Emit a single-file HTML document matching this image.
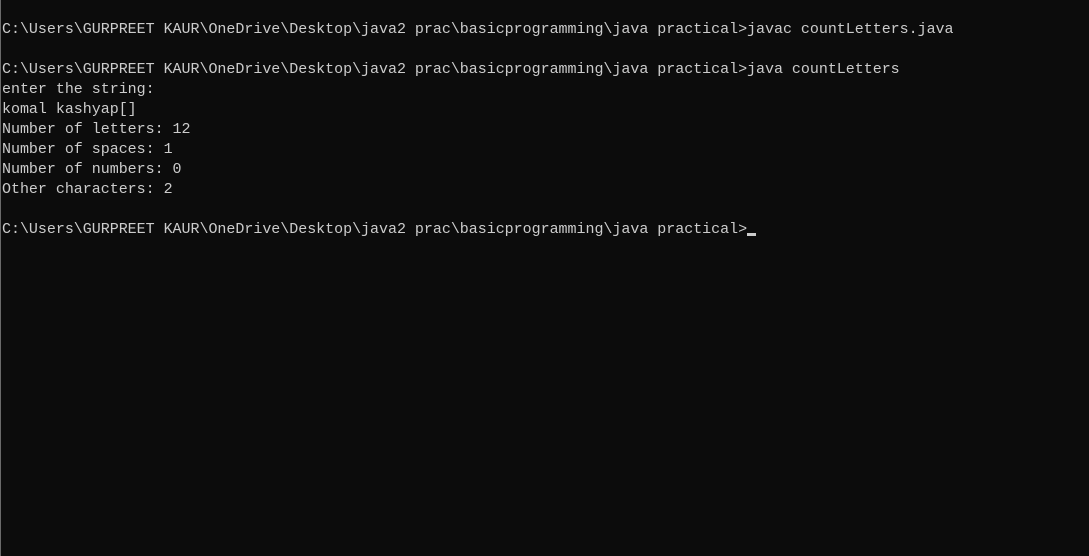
<!DOCTYPE html>
<html><head><style>
html,body{margin:0;padding:0;background:#0c0c0c;width:1089px;height:556px;overflow:hidden}
body{border-left:1px solid #6a6a6a;box-sizing:border-box}
pre{margin:0;position:absolute;left:2px;top:20px;font-family:"Liberation Mono",monospace;font-size:15px;line-height:20px;color:#cccccc;letter-spacing:-0.025px}
.cur{display:inline-block;width:9px;height:3px;background:#cccccc;vertical-align:-3px}
</style></head><body>
<pre>C:\Users\GURPREET KAUR\OneDrive\Desktop\java2 prac\basicprogramming\java practical>javac countLetters.java

C:\Users\GURPREET KAUR\OneDrive\Desktop\java2 prac\basicprogramming\java practical>java countLetters
enter the string:
komal kashyap[]
Number of letters: 12
Number of spaces: 1
Number of numbers: 0
Other characters: 2

C:\Users\GURPREET KAUR\OneDrive\Desktop\java2 prac\basicprogramming\java practical><span class="cur"></span></pre>
</body></html>
